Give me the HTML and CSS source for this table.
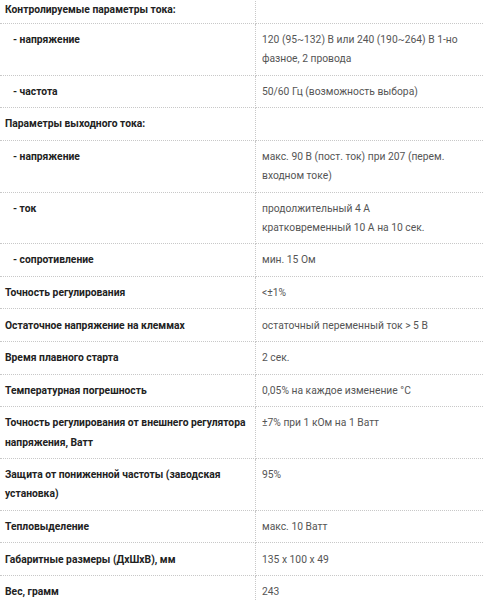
FILE: index.html
```html
<!DOCTYPE html>
<html lang="ru">
<head>
<meta charset="utf-8">
<title>Характеристики</title>
<link rel="stylesheet" href="styles.css">
</head>
<body>
<table class="specs">
  <colgroup><col class="col-label"><col class="col-value"></colgroup>
  <tbody>
    <tr class="first"><td class="label">Контролируемые параметры тока:</td><td class="value"></td></tr>
    <tr><td class="label sub">- напряжение</td><td class="value">120 (95~132) В или 240 (190~264) В 1-но фазное, 2 провода</td></tr>
    <tr><td class="label sub">- частота</td><td class="value">50/60 Гц (возможность выбора)</td></tr>
    <tr><td class="label">Параметры выходного тока:</td><td class="value"></td></tr>
    <tr><td class="label sub">- напряжение</td><td class="value">макс. 90 В (пост. ток) при 207 (перем. входном токе)</td></tr>
    <tr><td class="label sub">- ток</td><td class="value">продолжительный 4 А<br>кратковременный 10 А на 10 сек.</td></tr>
    <tr><td class="label sub">- сопротивление</td><td class="value">мин. 15 Ом</td></tr>
    <tr><td class="label">Точность регулирования</td><td class="value">&lt;±1%</td></tr>
    <tr><td class="label">Остаточное напряжение на клеммах</td><td class="value">остаточный переменный ток &gt; 5 В</td></tr>
    <tr><td class="label">Время плавного старта</td><td class="value">2 сек.</td></tr>
    <tr><td class="label">Температурная погрешность</td><td class="value">0,05% на каждое изменение °С</td></tr>
    <tr><td class="label">Точность регулирования от внешнего регулятора напряжения, Ватт</td><td class="value">±7% при 1 кОм на 1 Ватт</td></tr>
    <tr><td class="label">Защита от пониженной частоты (заводская установка)</td><td class="value">95%</td></tr>
    <tr><td class="label">Тепловыделение</td><td class="value">макс. 10 Ватт</td></tr>
    <tr><td class="label">Габаритные размеры (ДхШхВ), мм</td><td class="value">135 x 100 x 49</td></tr>
    <tr><td class="label">Вес, грамм</td><td class="value">243</td></tr>
  </tbody>
</table>
</body>
</html>
```
FILE: styles.css
```css
html, body {
  margin: 0;
  padding: 0;
  background: #ffffff;
}
body {
  font-family: Roboto, "Liberation Sans", Arial, sans-serif;
  font-size: 10.3px;
  line-height: 19.2px;
  color: #222222;
  overflow: hidden;
}
.specs {
  width: 483px;
  border-collapse: collapse;
  margin-top: -6.6px;
  table-layout: fixed;
}
.col-label {
  width: 255px;
}
.specs td {
  vertical-align: top;
  padding: 6.2px 4px 6.2px 6.5px;
  border-bottom: 1px dotted #c8c8c8;
}
.specs .first td {
  padding-bottom: 4px;
}
.specs .label {
  padding-left: 5px;
  padding-right: 2px;
  font-weight: 700;
  color: #222222;
  border-right: 1px dotted #c8c8c8;
}
.specs .label.sub {
  padding-left: 13px;
}
.specs .value {
  color: #555555;
}
```
